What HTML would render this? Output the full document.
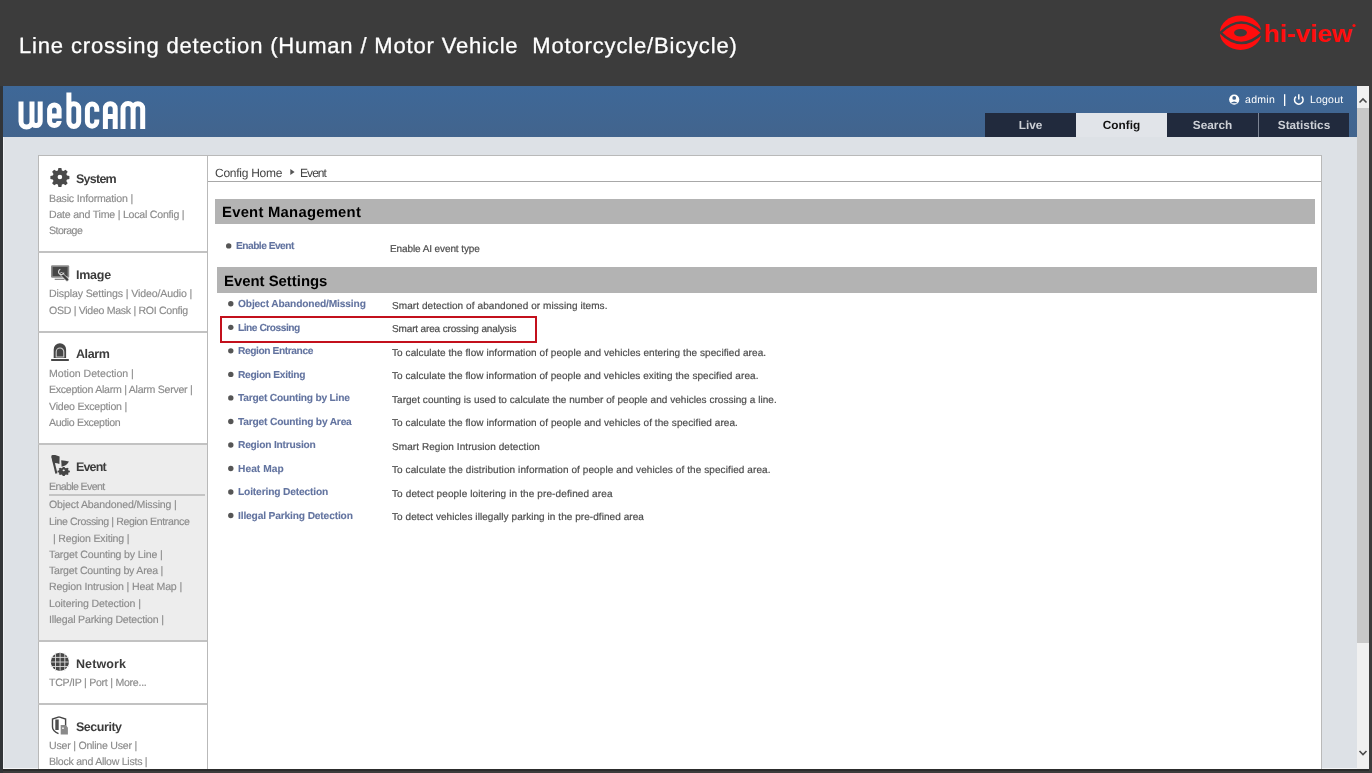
<!DOCTYPE html>
<html><head><meta charset="utf-8"><title>Line crossing detection</title><style>
*{margin:0;padding:0;box-sizing:border-box}
html,body{width:1372px;height:773px;overflow:hidden;background:#3c3c3c;font-family:"Liberation Sans",sans-serif}
.t{will-change:transform;text-rendering:geometricPrecision}
.t{position:absolute;white-space:nowrap;line-height:normal}
.r{position:absolute}
.tab{font-weight:bold;font-size:11.8px;text-align:center;line-height:24px;will-change:transform;text-rendering:geometricPrecision}
</style></head>
<body>
<div class="t" style="left:18.74px;top:33.09px;font-size:22.00px;letter-spacing:0.835px;font-weight:normal;color:#fff;-webkit-text-stroke:0.3px #fff;">Line crossing detection (Human / Motor Vehicle&nbsp; Motorcycle/Bicycle)</div>
<svg class="r" style="left:1212px;top:8px" width="150" height="50" viewBox="1212 8 150 50">
<ellipse cx="1240.6" cy="32.7" rx="20.8" ry="17.2" fill="#ff0d0d"/>
<path d="M1220.5,32.7 Q1241,12.3 1262.5,32.7 Q1241,53.3 1220.5,32.7 Z" fill="none" stroke="#3c3c3c" stroke-width="2.6"/>
<ellipse cx="1240.5" cy="32.7" rx="6.4" ry="3.8" fill="#3c3c3c"/>
<rect x="1261.3" y="18" width="2.2" height="30" fill="#3c3c3c"/>
<text x="1263.5" y="42.4" font-family="Liberation Sans" font-weight="bold" font-size="23" fill="#ff0d0d" textLength="88.5" lengthAdjust="spacingAndGlyphs">hi-view</text>
<circle cx="1354" cy="25.5" r="1.6" fill="#ff0d0d"/>
</svg>
<div class="r" style="left:3px;top:86px;width:1354px;height:51px;background:linear-gradient(#3e6898,#42648d)"></div>
<div class="r" style="left:3px;top:137px;width:1354px;height:632px;background:#dde1e6"></div>
<div class="r" style="left:3px;top:137px;width:1px;height:631px;background:#eef0f3"></div>
<div class="r" style="left:3px;top:768px;width:1354px;height:1px;background:#f4f5f7"></div>
<div class="r" style="left:0px;top:86px;width:3px;height:687px;background:#323538"></div>
<div class="r" style="left:3px;top:769px;width:1366px;height:2px;background:#2c2c2c"></div>
<div class="r" style="left:1357px;top:86px;width:12px;height:683px;background:#f0f0f0"></div>
<div class="r" style="left:1357px;top:108px;width:12px;height:535px;background:#c8c8c8"></div>
<svg class="r" style="left:1357px;top:86px" width="12" height="683" viewBox="0 0 12 683">
<path d="M2.5,16.5 L6,13 L9.5,16.5" fill="none" stroke="#4a4a4a" stroke-width="1.6"/>
<path d="M2.5,665 L6,668.5 L9.5,665" fill="none" stroke="#4a4a4a" stroke-width="1.6"/>
</svg>
<svg class="r" style="left:14px;top:88px" width="140" height="46" viewBox="14 88 140 46">
<g fill="none" stroke="#fff" stroke-width="5">
<path d="M21,101.5 V121.5 A5.5,5.5 0 0 0 32,121.5 V101.5 M32,121.5 A4.1,4.1 0 0 0 40.2,121.5 V101.5"/>
<path d="M49.6,116.1 H59.1 V109 A4.8,4.8 0 0 0 49.6,109 V121.5 A4.8,4.8 0 0 0 59.1,121.5 V121"/>
<path d="M68.9,92.5 V121.5 A4.9,4.9 0 0 0 78.7,121.5 V108.6 A4.9,4.9 0 0 0 68.9,108.6"/>
<path d="M96.8,111.8 V108.8 A4.7,4.7 0 0 0 87.4,108.8 V121.5 A4.7,4.7 0 0 0 96.8,121.5 V119.5"/>
<path d="M105.4,129 V108.6 A4.9,4.9 0 0 1 115.2,108.6 V129 M105.4,116.6 H115.2"/>
<path d="M123,129 V108.5 A4,4 0 0 1 133.1,108.5 V129 M133.1,108.5 A4,4 0 0 1 142.7,108.5 V129"/>
</g>
</svg>
<svg class="r" style="left:1226px;top:92px" width="82" height="16" viewBox="1226 92 82 16">
<circle cx="1234.2" cy="99.6" r="5.1" fill="#fff"/>
<circle cx="1234.2" cy="97.9" r="1.9" fill="#41658f"/>
<path d="M1230.6,103.2 Q1234.2,99.6 1237.8,103.2 Z" fill="#41658f"/>
<rect x="1284" y="94.2" width="1.3" height="11.8" fill="#fff"/>
<path d="M1296,96.6 A4.3,4.3 0 1 0 1301.6,96.6" fill="none" stroke="#fff" stroke-width="1.5"/>
<path d="M1298.8,94.2 V99.4" stroke="#fff" stroke-width="1.5"/>
</svg>
<div class="t" style="left:1245.37px;top:93.70px;font-size:10.50px;letter-spacing:0.310px;font-weight:normal;color:#fff;">admin</div>
<div class="t" style="left:1309.87px;top:93.70px;font-size:10.50px;letter-spacing:0.200px;font-weight:normal;color:#fff;">Logout</div>
<div class="r" style="left:1258px;top:113px;width:1px;height:24px;background:#7d8594"></div>
<div class="r tab" style="left:985px;top:113px;width:91px;height:24px;background:#212a3d;color:#cdd0d6">Live</div>
<div class="r tab" style="left:1076px;top:113px;width:91px;height:24px;background:#e1e4e9;color:#111">Config</div>
<div class="r tab" style="left:1167px;top:113px;width:91px;height:24px;background:#212a3d;color:#cdd0d6">Search</div>
<div class="r tab" style="left:1259px;top:113px;width:90px;height:24px;background:#212a3d;color:#cdd0d6">Statistics</div>
<div class="r" style="left:38px;top:155px;width:170px;height:614px;background:#fff;border:1px solid #b9b9b9;border-bottom:none"></div>
<div class="r" style="left:39px;top:443px;width:168px;height:198px;background:#ededed"></div>
<div class="r" style="left:38px;top:251px;width:170px;height:2px;background:#c2c2c2"></div>
<div class="r" style="left:38px;top:331px;width:170px;height:2px;background:#c2c2c2"></div>
<div class="r" style="left:38px;top:443px;width:170px;height:2px;background:#c2c2c2"></div>
<div class="r" style="left:38px;top:640px;width:170px;height:2px;background:#c2c2c2"></div>
<div class="r" style="left:38px;top:703px;width:170px;height:2px;background:#c2c2c2"></div>
<div class="r" style="left:49px;top:494px;width:156px;height:2px;background:#c4c4c4"></div>
<div class="t" style="left:76.25px;top:171.29px;font-size:12.50px;letter-spacing:-0.751px;font-weight:bold;color:#3c3c3c;transform:translateY(0.5px);">System</div>
<div class="t" style="left:49.16px;top:192.91px;font-size:10.60px;letter-spacing:-0.188px;font-weight:normal;color:#8c8c8c;-webkit-text-stroke:0.15px #8c8c8c;">Basic Information |</div>
<div class="t" style="left:49.16px;top:209.31px;font-size:10.60px;letter-spacing:-0.226px;font-weight:normal;color:#8c8c8c;-webkit-text-stroke:0.15px #8c8c8c;">Date and Time | Local Config |</div>
<div class="t" style="left:49.16px;top:225.21px;font-size:10.60px;letter-spacing:-0.552px;font-weight:normal;color:#8c8c8c;-webkit-text-stroke:0.15px #8c8c8c;">Storage</div>
<div class="t" style="left:76.05px;top:267.49px;font-size:12.50px;letter-spacing:-0.244px;font-weight:bold;color:#3c3c3c;transform:translateY(0.5px);">Image</div>
<div class="t" style="left:49.16px;top:288.41px;font-size:10.60px;letter-spacing:-0.128px;font-weight:normal;color:#8c8c8c;-webkit-text-stroke:0.15px #8c8c8c;">Display Settings | Video/Audio |</div>
<div class="t" style="left:49.16px;top:304.81px;font-size:10.60px;letter-spacing:-0.311px;font-weight:normal;color:#8c8c8c;-webkit-text-stroke:0.15px #8c8c8c;">OSD | Video Mask | ROI Config</div>
<div class="t" style="left:76.25px;top:346.49px;font-size:12.50px;letter-spacing:-0.404px;font-weight:bold;color:#3c3c3c;transform:translateY(0.5px);">Alarm</div>
<div class="t" style="left:49.16px;top:367.71px;font-size:10.60px;letter-spacing:-0.020px;font-weight:normal;color:#8c8c8c;-webkit-text-stroke:0.15px #8c8c8c;">Motion Detection |</div>
<div class="t" style="left:49.16px;top:384.21px;font-size:10.60px;letter-spacing:-0.268px;font-weight:normal;color:#8c8c8c;-webkit-text-stroke:0.15px #8c8c8c;">Exception Alarm | Alarm Server |</div>
<div class="t" style="left:49.16px;top:400.71px;font-size:10.60px;letter-spacing:-0.245px;font-weight:normal;color:#8c8c8c;-webkit-text-stroke:0.15px #8c8c8c;">Video Exception |</div>
<div class="t" style="left:49.16px;top:416.81px;font-size:10.60px;letter-spacing:-0.348px;font-weight:normal;color:#8c8c8c;-webkit-text-stroke:0.15px #8c8c8c;">Audio Exception</div>
<div class="t" style="left:76.15px;top:458.99px;font-size:12.50px;letter-spacing:-0.844px;font-weight:bold;color:#3c3c3c;transform:translateY(0.5px);">Event</div>
<div class="t" style="left:49.16px;top:480.81px;font-size:10.60px;letter-spacing:-0.625px;font-weight:normal;color:#8c8c8c;-webkit-text-stroke:0.15px #8c8c8c;">Enable Event</div>
<div class="t" style="left:49.16px;top:499.41px;font-size:10.60px;letter-spacing:-0.154px;font-weight:normal;color:#8c8c8c;-webkit-text-stroke:0.15px #8c8c8c;">Object Abandoned/Missing |</div>
<div class="t" style="left:49.16px;top:516.41px;font-size:10.60px;letter-spacing:-0.384px;font-weight:normal;color:#8c8c8c;-webkit-text-stroke:0.15px #8c8c8c;">Line Crossing | Region Entrance</div>
<div class="t" style="left:52.66px;top:533.11px;font-size:10.60px;letter-spacing:-0.191px;font-weight:normal;color:#8c8c8c;-webkit-text-stroke:0.15px #8c8c8c;">| Region Exiting |</div>
<div class="t" style="left:49.16px;top:549.11px;font-size:10.60px;letter-spacing:-0.164px;font-weight:normal;color:#8c8c8c;-webkit-text-stroke:0.15px #8c8c8c;">Target Counting by Line |</div>
<div class="t" style="left:49.16px;top:564.91px;font-size:10.60px;letter-spacing:-0.208px;font-weight:normal;color:#8c8c8c;-webkit-text-stroke:0.15px #8c8c8c;">Target Counting by Area |</div>
<div class="t" style="left:49.16px;top:581.41px;font-size:10.60px;letter-spacing:-0.152px;font-weight:normal;color:#8c8c8c;-webkit-text-stroke:0.15px #8c8c8c;">Region Intrusion | Heat Map |</div>
<div class="t" style="left:49.16px;top:597.71px;font-size:10.60px;letter-spacing:-0.104px;font-weight:normal;color:#8c8c8c;-webkit-text-stroke:0.15px #8c8c8c;">Loitering Detection |</div>
<div class="t" style="left:49.16px;top:614.11px;font-size:10.60px;letter-spacing:-0.192px;font-weight:normal;color:#8c8c8c;-webkit-text-stroke:0.15px #8c8c8c;">Illegal Parking Detection |</div>
<div class="t" style="left:75.95px;top:656.29px;font-size:12.50px;letter-spacing:0.089px;font-weight:bold;color:#3c3c3c;transform:translateY(0.5px);">Network</div>
<div class="t" style="left:49.16px;top:677.41px;font-size:10.60px;letter-spacing:-0.267px;font-weight:normal;color:#8c8c8c;-webkit-text-stroke:0.15px #8c8c8c;">TCP/IP | Port | More...</div>
<div class="t" style="left:75.95px;top:718.69px;font-size:12.50px;letter-spacing:-0.468px;font-weight:bold;color:#3c3c3c;transform:translateY(0.5px);">Security</div>
<div class="t" style="left:49.16px;top:740.41px;font-size:10.60px;letter-spacing:-0.231px;font-weight:normal;color:#8c8c8c;-webkit-text-stroke:0.15px #8c8c8c;">User | Online User |</div>
<div class="t" style="left:49.16px;top:756.21px;font-size:10.60px;letter-spacing:-0.275px;font-weight:normal;color:#8c8c8c;-webkit-text-stroke:0.15px #8c8c8c;">Block and Allow Lists |</div>
<svg class="r" style="left:48px;top:160px" width="24" height="600" viewBox="48 160 24 600">
<path fill="#4a4a4a" fill-rule="evenodd" d="M58.4,168 h3 l0.5,2.4 l1.6,0.7 l2.1,-1.4 l2.1,2.1 l-1.4,2.1 l0.7,1.6 l2.4,0.5 v3 l-2.4,0.5 l-0.7,1.6 l1.4,2.1 l-2.1,2.1 l-2.1,-1.4 l-1.6,0.7 l-0.5,2.4 h-3 l-0.5,-2.4 l-1.6,-0.7 l-2.1,1.4 l-2.1,-2.1 l1.4,-2.1 l-0.7,-1.6 l-2.4,-0.5 v-3 l2.4,-0.5 l0.7,-1.6 l-1.4,-2.1 l2.1,-2.1 l2.1,1.4 l1.6,-0.7 Z M62.2,177 A2.3,2.3 0 1 0 57.6,177 A2.3,2.3 0 1 0 62.2,177 Z"/>
<rect x="51" y="265.3" width="18.2" height="12.4" rx="1.2" fill="#8c8c8c"/>
<rect x="52.6" y="266.9" width="15" height="9.2" fill="#474747"/>
<rect x="54.7" y="278.7" width="10" height="1.3" fill="#8a8a8a"/>
<path d="M61.5,274 L67.2,279.6" stroke="#c8c8c8" stroke-width="3.6" stroke-linecap="round"/>
<path d="M61.5,274 L67.2,279.6" stroke="#3e3e3e" stroke-width="2.2" stroke-linecap="round"/>
<path d="M60.3,269.2 A2.8,2.8 0 1 0 64,272.6" fill="none" stroke="#d8d8d8" stroke-width="1.2"/>
<path d="M53.7,358 V349.5 A6.2,6.2 0 0 1 66.1,349.5 V358 Z" fill="#474747"/>
<path d="M56.2,357 V351.8 A3.8,3.8 0 0 1 63.8,351.8 V357 Z" fill="none" stroke="#d0d0d0" stroke-width="1.1"/>
<rect x="51" y="359" width="18" height="2" rx="0.8" fill="#474747"/>
<path d="M52.2,456.2 L56.4,473.6" stroke="#454545" stroke-width="2.1"/>
<path d="M51.4,455.5 C54,454.6 56.8,455.4 59.6,456.6 L59.4,463.9 C57,463.1 54.6,462.9 53.2,463.3 Z" fill="#454545"/>
<path d="M61.2,460.3 C64,460.6 66.5,460.9 68.9,461.4 C67.8,463.6 66.2,465.4 61.6,466.8 Z" fill="#454545"/>
<g transform="translate(63.7,470.4) scale(1.1,0.8)"><path fill="#454545" fill-rule="evenodd" d="M-0.9,-4.3 h1.8 l0.3,1.2 l1,0.5 l1.1,-0.7 l1.3,1.3 l-0.7,1.1 l0.5,1 l1.2,0.3 v1.8 l-1.2,0.3 l-0.5,1 l0.7,1.1 l-1.3,1.3 l-1.1,-0.7 l-1,0.5 l-0.3,1.2 h-1.8 l-0.3,-1.2 l-1,-0.5 l-1.1,0.7 l-1.3,-1.3 l0.7,-1.1 l-0.5,-1 l-1.2,-0.3 v-1.8 l1.2,-0.3 l0.5,-1 l-0.7,-1.1 l1.3,-1.3 l1.1,0.7 l1,-0.5 Z M1,0 A1,1 0 1 0 -1,0 A1,1 0 1 0 1,0 Z"/></g>
<circle cx="59.9" cy="661.9" r="9.1" fill="#454545"/>
<path d="M55.5,652.8 V671 M60.1,652.8 V671 M64.8,652.8 V671 M50.8,657.4 H69 M50.8,662 H69 M50.8,666.5 H69" stroke="#dcdcdc" stroke-width="0.9" fill="none"/>
<path d="M59,716.8 L65.6,719 V727 M59,716.8 L52.5,719 V727 Q52.5,731 58.5,733.6" fill="none" stroke="#454545" stroke-width="1.4"/>
<rect x="55.3" y="719.5" width="3.4" height="10.5" fill="#4d4d4d"/>
<path d="M60.7,725 H65.5 L67.9,727.4 V734.6 H60.7 Z" fill="#8a8a8a"/>
<rect x="62" y="727.5" width="2" height="1.5" fill="#e0e0e0"/>
</svg>
<div class="r" style="left:207px;top:155px;width:1115px;height:614px;background:#fff;border:1px solid #b9b9b9;border-bottom:none"></div>
<div class="r" style="left:208px;top:181px;width:1113px;height:1px;background:#a8a8a8"></div>
<div class="t" style="left:215.28px;top:165.54px;font-size:12.00px;letter-spacing:-0.266px;font-weight:normal;color:#444;">Config Home</div>
<svg class="r" style="left:289px;top:167px" width="8" height="10"><path d="M1.3,2 L5.6,5 L1.3,8 Z" fill="#555"/></svg>
<div class="t" style="left:300.28px;top:165.54px;font-size:12.00px;letter-spacing:-0.938px;font-weight:normal;color:#444;">Event</div>
<div class="r" style="left:215px;top:199px;width:1100px;height:25px;background:#b3b3b3"></div>
<div class="t" style="left:221.91px;top:204.61px;font-size:14.80px;letter-spacing:0.265px;font-weight:bold;color:#000;">Event Management</div>
<div class="r" style="left:217px;top:267px;width:1100px;height:26px;background:#b3b3b3"></div>
<div class="t" style="left:224.21px;top:273.72px;font-size:14.90px;letter-spacing:-0.004px;font-weight:bold;color:#000;">Event Settings</div>
<svg class="r" style="left:0;top:0" width="400" height="540"><g fill="#555"><circle cx="228.7" cy="245.9" r="2.7"/><circle cx="230.8" cy="303.80" r="2.7"/><circle cx="230.8" cy="327.33" r="2.7"/><circle cx="230.8" cy="350.86" r="2.7"/><circle cx="230.8" cy="374.39" r="2.7"/><circle cx="230.8" cy="397.92" r="2.7"/><circle cx="230.8" cy="421.45" r="2.7"/><circle cx="230.8" cy="444.98" r="2.7"/><circle cx="230.8" cy="468.51" r="2.7"/><circle cx="230.8" cy="492.04" r="2.7"/><circle cx="230.8" cy="515.57" r="2.7"/></g></svg>
<div class="t" style="left:236.39px;top:240.97px;font-size:10.20px;letter-spacing:-0.508px;font-weight:bold;color:#62739f;-webkit-text-stroke:0.1px #62739f;">Enable Event</div>
<div class="t" style="left:389.80px;top:243.55px;font-size:10.00px;letter-spacing:-0.101px;font-weight:normal;color:#4d4d4d;-webkit-text-stroke:0.2px #4d4d4d;">Enable AI event type</div>
<div class="t" style="left:238.29px;top:299.07px;font-size:10.20px;letter-spacing:-0.134px;font-weight:bold;color:#62739f;-webkit-text-stroke:0.1px #62739f;">Object Abandoned/Missing</div>
<div class="t" style="left:391.90px;top:300.55px;font-size:10.00px;letter-spacing:0.082px;font-weight:normal;color:#4d4d4d;-webkit-text-stroke:0.2px #4d4d4d;">Smart detection of abandoned or missing items.</div>
<div class="t" style="left:238.29px;top:322.60px;font-size:10.20px;letter-spacing:-0.475px;font-weight:bold;color:#62739f;-webkit-text-stroke:0.1px #62739f;">Line Crossing</div>
<div class="t" style="left:391.90px;top:324.08px;font-size:10.00px;letter-spacing:-0.144px;font-weight:normal;color:#4d4d4d;-webkit-text-stroke:0.2px #4d4d4d;">Smart area crossing analysis</div>
<div class="t" style="left:238.29px;top:346.13px;font-size:10.20px;letter-spacing:-0.399px;font-weight:bold;color:#62739f;-webkit-text-stroke:0.1px #62739f;">Region Entrance</div>
<div class="t" style="left:391.90px;top:347.61px;font-size:10.00px;letter-spacing:0.072px;font-weight:normal;color:#4d4d4d;-webkit-text-stroke:0.2px #4d4d4d;">To calculate the flow information of people and vehicles entering the specified area.</div>
<div class="t" style="left:238.29px;top:369.66px;font-size:10.20px;letter-spacing:-0.292px;font-weight:bold;color:#62739f;-webkit-text-stroke:0.1px #62739f;">Region Exiting</div>
<div class="t" style="left:391.90px;top:371.14px;font-size:10.00px;letter-spacing:0.068px;font-weight:normal;color:#4d4d4d;-webkit-text-stroke:0.2px #4d4d4d;">To calculate the flow information of people and vehicles exiting the specified area.</div>
<div class="t" style="left:238.29px;top:393.19px;font-size:10.20px;letter-spacing:-0.206px;font-weight:bold;color:#62739f;-webkit-text-stroke:0.1px #62739f;">Target Counting by Line</div>
<div class="t" style="left:391.90px;top:394.67px;font-size:10.00px;letter-spacing:0.039px;font-weight:normal;color:#4d4d4d;-webkit-text-stroke:0.2px #4d4d4d;">Target counting is used to calculate the number of people and vehicles crossing a line.</div>
<div class="t" style="left:238.29px;top:416.72px;font-size:10.20px;letter-spacing:-0.179px;font-weight:bold;color:#62739f;-webkit-text-stroke:0.1px #62739f;">Target Counting by Area</div>
<div class="t" style="left:391.90px;top:418.20px;font-size:10.00px;letter-spacing:0.073px;font-weight:normal;color:#4d4d4d;-webkit-text-stroke:0.2px #4d4d4d;">To calculate the flow information of people and vehicles of the specified area.</div>
<div class="t" style="left:238.29px;top:440.25px;font-size:10.20px;letter-spacing:-0.207px;font-weight:bold;color:#62739f;-webkit-text-stroke:0.1px #62739f;">Region Intrusion</div>
<div class="t" style="left:391.90px;top:441.73px;font-size:10.00px;letter-spacing:0.072px;font-weight:normal;color:#4d4d4d;-webkit-text-stroke:0.2px #4d4d4d;">Smart Region Intrusion detection</div>
<div class="t" style="left:238.29px;top:463.78px;font-size:10.20px;letter-spacing:0.062px;font-weight:bold;color:#62739f;-webkit-text-stroke:0.1px #62739f;">Heat Map</div>
<div class="t" style="left:391.90px;top:465.26px;font-size:10.00px;letter-spacing:0.090px;font-weight:normal;color:#4d4d4d;-webkit-text-stroke:0.2px #4d4d4d;">To calculate the distribution information of people and vehicles of the specified area.</div>
<div class="t" style="left:238.29px;top:487.31px;font-size:10.20px;letter-spacing:-0.139px;font-weight:bold;color:#62739f;-webkit-text-stroke:0.1px #62739f;">Loitering Detection</div>
<div class="t" style="left:391.90px;top:488.79px;font-size:10.00px;letter-spacing:0.120px;font-weight:normal;color:#4d4d4d;-webkit-text-stroke:0.2px #4d4d4d;">To detect people loitering in the pre-defined area</div>
<div class="t" style="left:238.29px;top:510.84px;font-size:10.20px;letter-spacing:-0.142px;font-weight:bold;color:#62739f;-webkit-text-stroke:0.1px #62739f;">Illegal Parking Detection</div>
<div class="t" style="left:391.90px;top:512.32px;font-size:10.00px;letter-spacing:0.058px;font-weight:normal;color:#4d4d4d;-webkit-text-stroke:0.2px #4d4d4d;">To detect vehicles illegally parking in the pre-dfined area</div>
<div class="r" style="left:220.3px;top:315.5px;width:316.5px;height:27px;border:2px solid #c3101c"></div>
</body></html>
